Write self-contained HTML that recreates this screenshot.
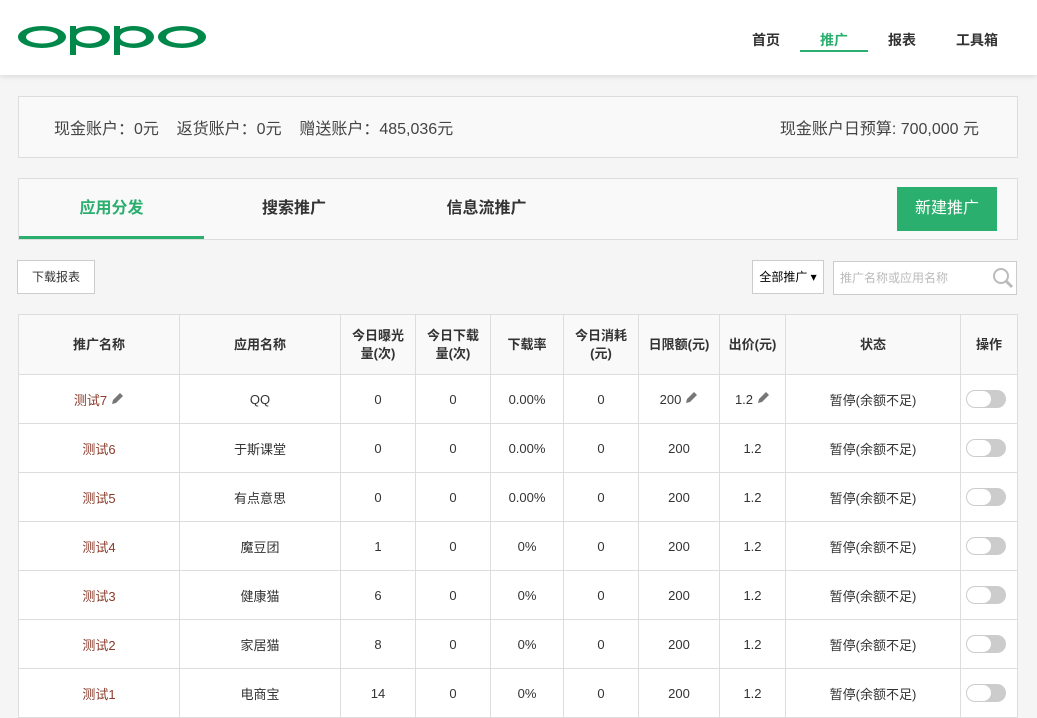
<!DOCTYPE html>
<html><head><meta charset="utf-8">
<style>
*{margin:0;padding:0;box-sizing:border-box}
body{width:1037px;height:718px;overflow:hidden;background:#f5f5f5;font-family:"Liberation Sans","Noto Sans CJK SC",sans-serif;color:#333;position:relative}
.hdr{position:absolute;left:0;top:0;width:1037px;height:75px;background:#fff;box-shadow:0 2px 5px rgba(0,0,0,.1)}
.nav{position:absolute;top:30px;font-size:14px;font-weight:bold;color:#333}
.box{position:absolute;background:#f9f9f9;border:1px solid #ddd}
.tab{position:absolute;top:0;height:60px;line-height:60px;font-size:16px;font-weight:bold;text-align:center;color:#333}
.btn{position:absolute;background:#fff;border:1px solid #ccc;font-size:12px;text-align:center}
table{position:absolute;left:18px;top:314px;border-collapse:collapse;table-layout:fixed;width:999px;background:#fff}
td,th{border:1px solid #ddd;text-align:center;font-size:13px;color:#333;height:49px;padding:0}
th{background:#f9f9f9;height:60px;font-weight:bold;line-height:18px}
td.n{color:#8a3b2b}
.tg{display:inline-block;width:40px;height:18px;border-radius:9px;background:#ccc;position:relative;vertical-align:middle;margin-left:-7px}
.tg:after{content:"";position:absolute;left:1px;top:1px;width:24px;height:16px;border-radius:8px;background:#fff}
.pen{display:inline-block;vertical-align:-1px;margin-left:3px}
.acc{font-size:16px;color:#444}
</style></head><body>
<div class="hdr">
<svg width="220" height="75" style="position:absolute;left:0;top:0">
<g fill="#00884a" fill-rule="evenodd">
<path d="M18 37a24 11 0 1 0 48 0a24 11 0 1 0 -48 0zM26 37a16 6.5 0 1 0 32 0a16 6.5 0 1 0 -32 0z"/>
<path d="M70 26h6v29h-6z"/>
<path d="M70 37a20 11 0 1 0 40 0a20 11 0 1 0 -40 0zM76 37a13 6.5 0 1 0 26 0a13 6.5 0 1 0 -26 0z"/>
<path d="M114 26h6v29h-6z"/>
<path d="M114 37a20 11 0 1 0 40 0a20 11 0 1 0 -40 0zM120 37a13 6.5 0 1 0 26 0a13 6.5 0 1 0 -26 0z"/>
<path d="M158 37a24 11 0 1 0 48 0a24 11 0 1 0 -48 0zM166 37a16 6.5 0 1 0 32 0a16 6.5 0 1 0 -32 0z"/>
</g></svg>
<div class="nav" style="left:752px">首页</div>
<div class="nav" style="left:820px;color:#2baf6f">推广</div>
<div style="position:absolute;left:800px;top:50px;width:68px;height:2px;background:#2baf6f"></div>
<div class="nav" style="left:888px">报表</div>
<div class="nav" style="left:956px">工具箱</div>
</div>
<div class="box" style="left:18px;top:96px;width:1000px;height:62px">
<span class="acc" style="position:absolute;left:35px;top:18px">现金账户：0元&nbsp;&nbsp;&nbsp;&nbsp;返货账户：0元&nbsp;&nbsp;&nbsp;&nbsp;赠送账户：485,036元</span>
<span class="acc" style="position:absolute;right:38px;top:18px">现金账户日预算: 700,000 元</span>
</div>
<div class="box" style="left:18px;top:178px;width:1000px;height:62px">
<div class="tab" style="left:0;width:185px;color:#2baf6f">应用分发</div>
<div style="position:absolute;left:0;top:57px;width:185px;height:3px;background:#2baf6f"></div>
<div class="tab" style="left:185px;width:180px">搜索推广</div>
<div class="tab" style="left:365px;width:205px">信息流推广</div>
<div style="position:absolute;left:878px;top:8px;width:100px;height:44px;background:#2baf6f;color:#fff;font-size:16px;line-height:44px;text-align:center">新建推广</div>
</div>
<div class="btn" style="left:17px;top:260px;width:78px;height:34px;line-height:32px">下载报表</div>
<div class="btn" style="left:752px;top:260px;width:72px;height:34px;line-height:32px;color:#000">全部推广 ▾</div>
<div class="btn" style="left:833px;top:261px;width:184px;height:34px;line-height:32px;text-align:left;padding-left:6px;color:#bbb">推广名称或应用名称
<svg width="22" height="22" style="position:absolute;right:2px;top:5px"><circle cx="9" cy="9" r="7" fill="none" stroke="#bbb" stroke-width="2"/><path d="M14 14l6 6" stroke="#bbb" stroke-width="3"/></svg></div>
<table>
<colgroup><col style="width:161px"><col style="width:161px"><col style="width:75px"><col style="width:75px"><col style="width:73px"><col style="width:75px"><col style="width:81px"><col style="width:66px"><col style="width:175px"><col style="width:57px"></colgroup>
<tr><th>推广名称</th><th>应用名称</th><th>今日曝光<br>量(次)</th><th>今日下载<br>量(次)</th><th>下载率</th><th>今日消耗<br>(元)</th><th>日限额(元)</th><th>出价(元)</th><th>状态</th><th>操作</th></tr>
<tr><td class="n">测试7<svg class="pen" width="14" height="14"><path d="M2 12l1-4 7-7 3 3-7 7z" fill="#777"/></svg></td><td>QQ</td><td>0</td><td>0</td><td>0.00%</td><td>0</td><td>200<svg class="pen" width="14" height="14"><path d="M2 12l1-4 7-7 3 3-7 7z" fill="#777"/></svg></td><td>1.2<svg class="pen" width="14" height="14"><path d="M2 12l1-4 7-7 3 3-7 7z" fill="#777"/></svg></td><td>暂停(余额不足)</td><td><span class="tg"></span></td></tr>
<tr><td class="n">测试6</td><td>于斯课堂</td><td>0</td><td>0</td><td>0.00%</td><td>0</td><td>200</td><td>1.2</td><td>暂停(余额不足)</td><td><span class="tg"></span></td></tr>
<tr><td class="n">测试5</td><td>有点意思</td><td>0</td><td>0</td><td>0.00%</td><td>0</td><td>200</td><td>1.2</td><td>暂停(余额不足)</td><td><span class="tg"></span></td></tr>
<tr><td class="n">测试4</td><td>魔豆团</td><td>1</td><td>0</td><td>0%</td><td>0</td><td>200</td><td>1.2</td><td>暂停(余额不足)</td><td><span class="tg"></span></td></tr>
<tr><td class="n">测试3</td><td>健康猫</td><td>6</td><td>0</td><td>0%</td><td>0</td><td>200</td><td>1.2</td><td>暂停(余额不足)</td><td><span class="tg"></span></td></tr>
<tr><td class="n">测试2</td><td>家居猫</td><td>8</td><td>0</td><td>0%</td><td>0</td><td>200</td><td>1.2</td><td>暂停(余额不足)</td><td><span class="tg"></span></td></tr>
<tr><td class="n">测试1</td><td>电商宝</td><td>14</td><td>0</td><td>0%</td><td>0</td><td>200</td><td>1.2</td><td>暂停(余额不足)</td><td><span class="tg"></span></td></tr>
</table>
</body></html>
